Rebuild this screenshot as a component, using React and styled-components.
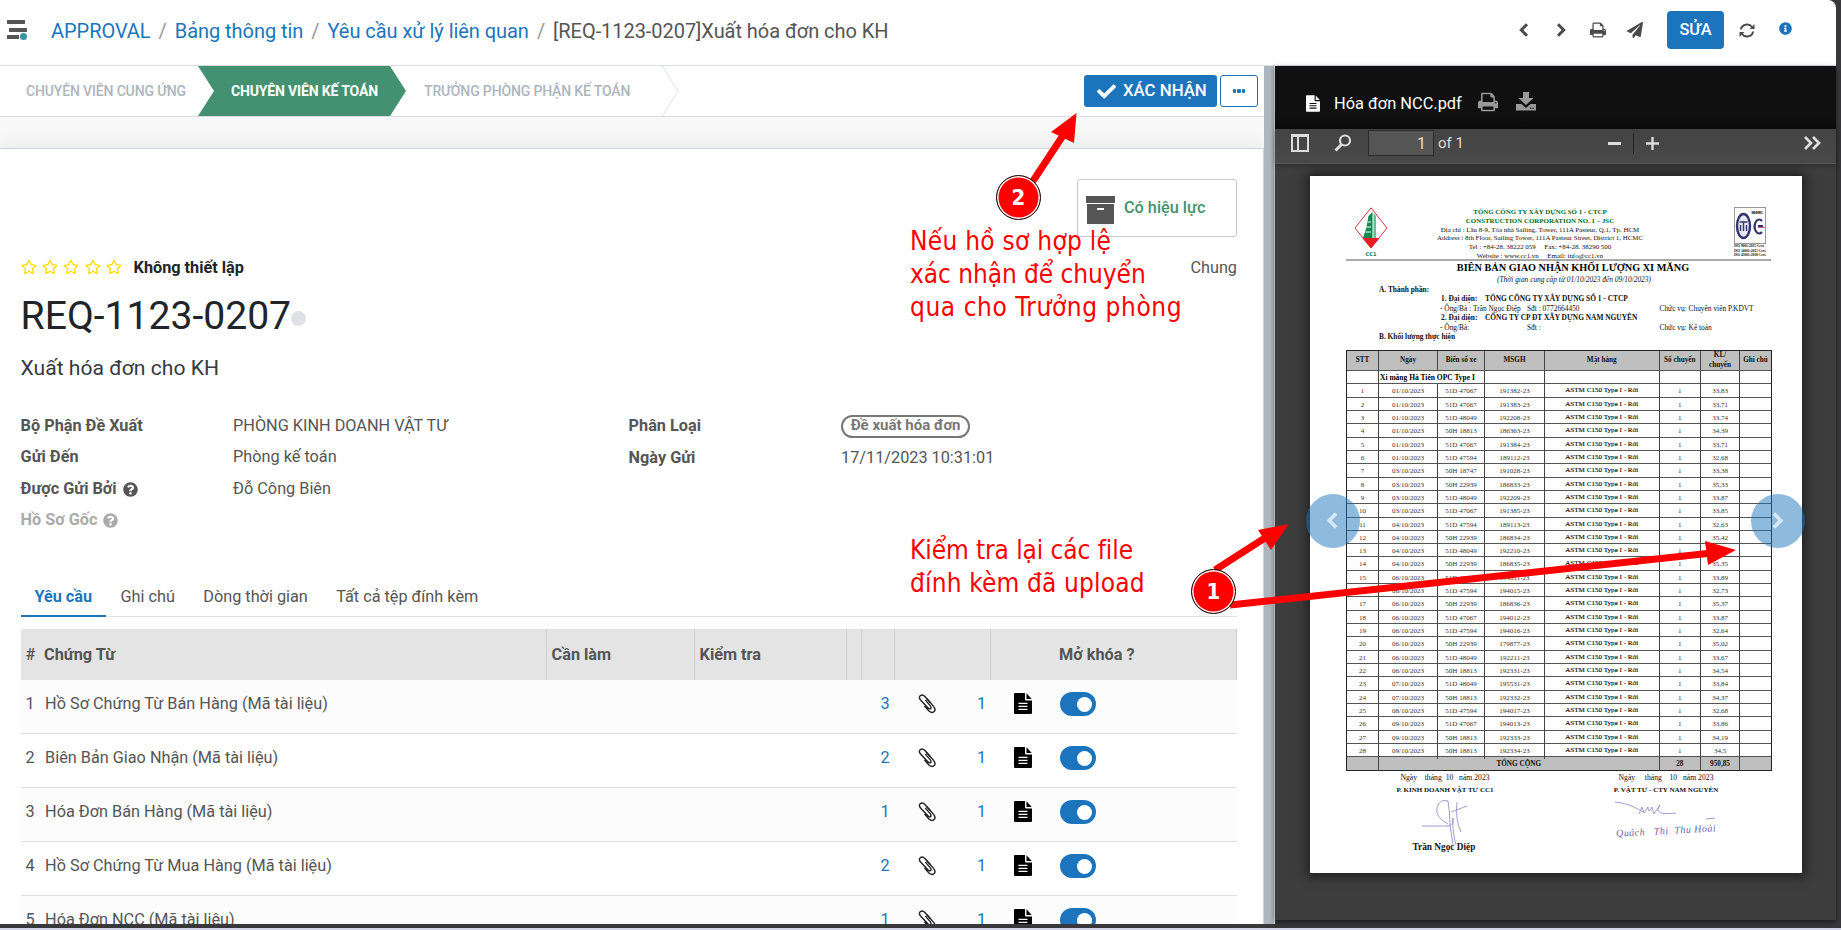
import React from "react";
import styled, { createGlobalStyle, css } from "styled-components";
import { FaPaperPlane, FaCheck, FaInfoCircle, FaQuestionCircle, FaRegStar } from "react-icons/fa";

const Global = createGlobalStyle`
  * { box-sizing: border-box; }
  html, body, #root { margin: 0; height: 100%; }
  body { font-family: Roboto, "Liberation Sans", sans-serif; font-size: 16.25px; color: #555; overflow: hidden; background: #3a3a3c; }
  svg { display: block; }
`;

const Screen = styled.div`
  position: relative; width: 1841px; height: 930px; overflow: hidden;
  display: flex; flex-direction: column; background: #38383a;
`;
const Frame = styled.div`
  width: 1836px; height: 928px; display: flex; flex-direction: column;
`;
const BottomEdge = styled.div`height: 2px; background: #d3d4e8;`;

/* top bar */
const TopBar = styled.header`
  height: 66px; flex: none; display: flex; align-items: flex-start; background: #fff;
  border-bottom: 1px solid #d9dde2; border-top-right-radius: 8px; padding: 0 44px 0 7px;
`;
const Burger = styled.div`width: 44px; padding-top: 20px;`;
const Crumbs = styled.nav`
  display: flex; font-size: 20px; line-height: 24px; padding-top: 19px; white-space: nowrap; flex: 1; color: #555;
  letter-spacing: -.05px;
  a { color: #1c75bc; }
  i { font-style: normal; color: #999; margin: 0 8px; }
`;
const TopActions = styled.div`
  display: flex; align-items: center; height: 38px; margin-top: 11px; color: #555;
`;
const TopIcon = styled.span`
  display: flex; margin-right: ${(p) => p.$gap}px; margin-top: ${(p) => p.$drop || 0}px; color: ${(p) => p.$color || "#4a4a4a"};
`;
const EditButton = styled.button`
  width: 57px; height: 38px; border: 0; border-radius: 4px; background: #1c75bc; color: #fff; padding: 0 0 2px;
  font: 500 16.3px Roboto, sans-serif; margin-right: 15px;
`;

/* panels */
const Body = styled.div`display: flex; height: 862px;`;
const FormPanel = styled.section`
  width: 1264px; height: 858px; display: flex; flex-direction: column; background: #f8f8f8; overflow: hidden;
`;
const Splitter = styled.div`width: 11px; height: 858px; background: #adb5bd; border-right: 1px solid #e4e7ea;`;

const StatusBar = styled.div`
  height: 51px; flex: none; display: flex; background: #fff; border-bottom: 1px solid #d9dde2;
  align-items: flex-start; padding-right: 6px;
`;
const Step = styled.div`
  height: 50px; width: ${(p) => p.$w}px; padding-left: ${(p) => p.$pad}px; display: flex; align-items: center;
  font-size: 14px; font-weight: 500; letter-spacing: -.15px; color: #adb5bd; white-space: nowrap;
  ${(p) => p.$active && css`
    background: #439170; color: #fff; font-weight: 700; margin-right: -16px;
    clip-path: polygon(0 0, 192px 0, 208px 50%, 192px 100%, 0 100%, 16px 50%);
  `}
`;
const Spacer = styled.div`flex: 1;`;
const ConfirmButton = styled.button`
  display: flex; align-items: center; width: 133px; height: 32px; margin: 9px 3px 0 0; border: 0; border-radius: 3px;
  background: #1c75bc; color: #fff; font: 500 16.8px Roboto, sans-serif; padding: 0 0 2px 13px; white-space: nowrap;
  svg { margin-right: 7px; position: relative; top: 1px; }
`;
const MoreButton = styled.button`
  width: 38px; height: 32px; margin-top: 9px; border: 1px solid #1c75bc; border-radius: 3px; background: #fff; padding: 0 0 1px;
  display: flex; align-items: center; justify-content: center; gap: 1px;
  i { width: 3.6px; height: 4px; background: #1c75bc; border-radius: 1px; }
`;
const Sheet = styled.div`
  margin-top: 31px; flex: 1; background: #fff; border-top: 1px solid #ced4da; border-right: 1px solid #ced4da;
  box-shadow: 0 -6px 16px rgba(0,0,0,.05); padding: 30px 26px 0 20.6px; display: flex; flex-direction: column; overflow: hidden;
`;
const StatBox = styled.div`
  align-self: flex-end; width: 160px; height: 58px; border: 1px solid #c5c9cc; border-radius: 3px; flex: none;
  display: flex; padding: 16px 0 0 8px; color: #439170; font-weight: 500;
  span { margin: 2px 0 0 9px; white-space: nowrap; }
`;
const RatingRow = styled.div`
  display: flex; height: 20px; margin-top: 20px; align-items: center; flex: none;
  strong { color: #212529; font-weight: 700; margin-left: 6px; }
  em { margin-left: auto; font-style: normal; }
`;
const Star = styled.span`color: #fd0; width: 21.4px; height: 16px; margin-top: -1px;`;
const Title = styled.h1`
  margin: 9.5px 0 0; height: 58px; display: flex; align-items: center; color: #212529; font-size: 39.1px; font-weight: 400; flex: none; white-space: nowrap;
  i { width: 15px; height: 15px; border-radius: 50%; background: #dee2e6; margin: 5px 0 0 -.5px; }
`;
const Subtitle = styled.div`font-size: 21.1px; line-height: 26px; margin-top: 10px; color: #343a40; flex: none;`;
const Fields = styled.div`display: flex; margin-top: 33.5px; height: 126px; flex: none;`;
const FieldColumn = styled.div`width: ${(p) => p.$w}px;`;
const Field = styled.div`
  display: flex; height: ${(p) => p.$h || 31.3}px; line-height: 24px;
  label { width: 212.5px; font-weight: 700; color: ${(p) => (p.$muted ? "#aaa" : "#555")}; display: flex; white-space: nowrap; }
  label svg { margin: 5px 0 0 6px; }
`;
const Tag = styled.span`
  width: 129px; height: 23px; border: 2px solid #777; border-radius: 12px; font-size: 15px; font-weight: 700; color: #777;
  line-height: 17px; text-align: center; white-space: nowrap; margin-top: 1px;
`;
const Tabs = styled.div`
  display: flex; margin-top: 36.4px; height: 41px; flex: none; border-bottom: 1px solid #dee2e6; line-height: 41px;
`;
const Tab = styled.div`
  padding: 0 14.2px; white-space: nowrap; height: 41px;
  ${(p) => p.$active && css`color: #1c75bc; font-weight: 700; border-bottom: 2px solid #1c75bc; padding-left: 13.8px;`}
`;
const Grid = styled.div`margin-top: 11.6px; width: 1216px; flex: none;`;
const HeadRow = styled.div`display: flex; height: 51px; background: #e4e4e4; line-height: 51px; font-weight: 700;`;
const HeadCell = styled.div`
  width: ${(p) => p.$w}px; padding-left: ${(p) => p.$pad ?? 5}px; border-right: 1px solid #cdcfd1; white-space: nowrap; flex: none;
  b { display: inline-block; width: 18.5px; font-weight: 500; }
`;
const DocRow = styled.div`
  display: flex; height: 53.9px; background: ${(p) => (p.$odd ? "#fcfcfc" : "#fff")}; border-bottom: 1px solid #dcdfe3; padding: 12px 0 0 5px;
  line-height: 23px;
`;
const Cell = styled.div`
  width: ${(p) => p.$w}px; flex: none; white-space: nowrap; padding-top: ${(p) => p.$top || 0}px;
  ${(p) => p.$link && css`color: #1c75bc;`}
`;
const Toggle = styled.div`
  width: 36px; height: 24px; border-radius: 12px; background: #1c75bc; padding: 5px 4px 4px 17px;
  i { display: block; width: 15px; height: 15px; border-radius: 50%; background: #fff; }
`;

/* viewer */
const Viewer = styled.section`
  width: 561px; height: 854px; display: flex; flex-direction: column; background: #3d3d3d; box-shadow: 0 2px 5px rgba(0,0,0,.5);
`;
const ViewerHead = styled.div`
  height: 63px; flex: none; background: linear-gradient(#101010 80%, #0b0b0b); color: #fff; display: flex; align-items: center; padding: 11px 0 0 31px;
  font-size: 16.4px; white-space: nowrap;
  span { margin: 1px 16px 0 14px; }
`;
const HeadGlyph = styled.div`display: flex; margin: -3px 18px 0 0;`;
const PdfBar = styled.div`
  height: 35px; flex: none; background: linear-gradient(#434343, #494949); border-bottom: 1px solid #555; box-shadow: 0 2px 4px rgba(0,0,0,.25);
  display: flex; align-items: center; padding: 0 15px 6px 16px; color: #ddd; font-size: 16px; z-index: 1;
`;
const PageInput = styled.div`
  width: 66px; height: 26px; border: 1px solid #2b2b2b; background: #555; text-align: right; padding-right: 7px; line-height: 25px; margin: 0 4px 0 16px;
`;
const PageCount = styled.span`font-size: 15px;`;
const BarGap = styled.div`width: ${(p) => p.$w}px;`;
const BarRule = styled.div`width: 1px; height: 21px; background: #222;`;
const PdfStage = styled.div`flex: 1; padding: 12px 0 0 35px;`;
const Page = styled.article`
  width: 492px; height: 697px; background: #fff; box-shadow: 0 0 10px 3px rgba(0,0,0,.5); color: #111;
  font-family: "Liberation Serif", serif; font-size: 8px; padding: 31px 31px 0 36px;
`;
const Letterhead = styled.div`
  display: flex; height: 54px; border-bottom: 2px solid #aaa; padding: 0 4px 0 8px;
`;
const Address = styled.div`
  width: 206px; text-align: center; margin: 0 91px 0 49px; white-space: pre; font-size: 6.92px; line-height: 8.8px; padding-top: 1px;
  b { display: block; color: #006a20; }
`;
const CertText = styled.div`font-size: 3.7px; line-height: 4.6px; width: 31px; white-space: nowrap; font-weight: 700; letter-spacing: -.1px;`;
const DocTitle = styled.h2`margin: 0 0 0 28px; font-size: 10.25px; line-height: 14px; text-align: center; width: 398px; white-space: nowrap; color: #000;`;
const DocSub = styled.div`font-style: italic; font-size: 7.4px; line-height: 9px; text-align: center; padding-left: 31px; height: 9.5px;`;
const Party = styled.div`
  display: flex; height: 9.6px; line-height: 9.6px; font-size: 7.4px; white-space: nowrap; padding-left: ${(p) => p.$in}px;
  > * { width: ${(p) => p.$w}px; }
  > :nth-child(2) { width: ${(p) => 219.500 - p.$w}px; }
`;
const Ledger = styled.div`border: 1px solid #222; margin-top: 8px; width: 426px;`;
const LedgerRow = styled.div`
  display: grid; grid-template-columns: 32px 59px 47px 60px 114.5px 41.5px 39px 31px; height: ${(p) => p.$h || 13.32}px; font-size: 7px; text-align: center; align-items: stretch;
  border-bottom: 1px solid #555; line-height: ${(p) => (p.$h || 16) - 1}px; white-space: nowrap; color: #333;
  > * { border-right: 1px solid #444; }
  > :last-child { border-right: 0; }
  ${(p) => p.$shade && css`background: #bfbfbf; font-weight: 700; color: #111; font-size: 7.2px;`}
  &:last-child { border-bottom: 0; line-height: 14px; }
`;
const Goods = styled.span`font-size: 7.1px; color: #000; line-height: 12px; -webkit-text-stroke: .1px #000;`;
const Stacked = styled.span`line-height: 9.5px; white-space: pre;`;
const GroupName = styled.span`grid-column: 2 / 4; text-align: left; padding-left: 1px; font-weight: 700; font-size: 7.5px; color: #000; line-height: 13px;`;
const TotalName = styled.span`grid-column: 2 / 6;`;
const Signs = styled.div`display: flex; padding-top: 1.5px;`;
const Sign = styled.div`
  width: ${(p) => p.$w}px; margin-left: ${(p) => p.$ml}px; text-align: center; font-size: 7.7px; white-space: pre; line-height: 10px;
  b { display: block; margin-top: 2px; font-size: 7px; }
  svg { margin: 5px auto 0; }
`;
const Signer = styled.div`font-weight: 700; font-size: 9.3px; line-height: 10px; margin: -8px 2px 0 0;`;
const Handwriting = styled.div`font: italic 10px "Liberation Serif", serif; color: #6a62b5; letter-spacing: .45px; margin-top: 5px; transform: rotate(-3deg);`;

/* overlays */
const NavDot = styled.button`
  position: absolute; left: ${(p) => p.$x}px; top: 494px; width: 54px; height: 54px; border-radius: 50%; border: 0; padding: 0 1px 1px 0;
  background: rgba(28,117,188,.5); color: rgba(255,255,255,.65); display: flex; align-items: center; justify-content: center;
`;
const Arrows = styled.svg`position: absolute; left: 0; top: 0;`;
const Note = styled.div`
  position: absolute; left: 910px; top: ${(p) => p.$y}px; color: #f00; white-space: nowrap;
  font: 26px/33.2px "DejaVu Sans Condensed", "DejaVu Sans", sans-serif; font-stretch: condensed;
`;
const NoteLine = styled.div`letter-spacing: ${(p) => p.$ls}px;`;
const Marker = styled.div`
  position: absolute; left: ${(p) => p.$x - 22.5}px; top: ${(p) => p.$y - 22.5}px; width: 45px; height: 45px; border-radius: 50%;
  background: #f00; border: 1.5px solid #111; box-shadow: inset 0 0 0 1.5px #fff; color: #fff; text-align: center;
  font: 700 22px/43px "DejaVu Sans Condensed", "DejaVu Sans", sans-serif; font-stretch: condensed;
`;

const printPath = "M384 1536h896v-256h-896v256zm0-640h896v-384h-160q-40 0-68-28t-28-68v-160h-640v640zm1152 64q0-26-19-45t-45-19-45 19-19 45 19 45 45 19 45-19 19-45zm128 0v416q0 13-9.500 22.500t-22.500 9.500h-224v160q0 40-28 68t-68 28h-960q-40 0-68-28t-28-68v-160h-224q-13 0-22.500-9.500t-9.500-22.500v-416q0-79 56.500-135.500t135.500-56.500h64v-544q0-40 28-68t68-28h672q40 0 88 20t76 48l152 152q28 28 48 76t20 88v256h64q79 0 135.500 56.500t56.500 135.500z";
const PrintIcon = ({ size, color = "currentColor" }) => (
  <svg width={size} height={size} viewBox="0 64 1664 1664" fill={color}><path d={printPath} /></svg>
);
const FileIcon = ({ w, h, color }) => (
  <svg width={w} height={h} viewBox="0 0 18 21" fill={color}>
    <path fillRule="evenodd" d="M1 0h10v6.300q0 1.200 1.200 1.200H18V20q0 1-1 1H1q-1 0-1-1V1Q0 0 1 0zM4.500 9.800v1.300h9V9.800zm0 3v1.300h9v-1.300zm0 3v1.300h9v-1.300z" />
    <path d="M12.500.3L17.700 6h-5.200z" />
  </svg>
);
const Chevron = ({ left, size = 14 }) => (
  <svg width={size} height={size} viewBox="0 0 14 14" fill="none" stroke="currentColor" strokeWidth="3">
    <path d={left ? "M10 1.200L4.300 7 10 12.800" : "M4 1.200L9.700 7 4 12.800"} />
  </svg>
);
const DownloadIcon = () => (
  <svg width="20" height="19" viewBox="0 0 20 19" fill="#999">
    <path d="M7 0h6v6h4.500L10 13 2.500 6H7z" /><path fillRule="evenodd" d="M0 12h5.500l4.500 4 4.500-4H20V18.500H0zM14 15.500v1.300h1.300v-1.300zm2.500 0v1.300h1.300v-1.300z" />
  </svg>
);
const RefreshIcon = () => (
  <svg width="16" height="15" viewBox="0 0 16 15" fill="none" stroke="#4a4a4a" strokeWidth="2">
    <path d="M2 6.500A6 5.500 0 0 1 13 4M14 8.500A6 5.500 0 0 1 3 11" /><path d="M15.500 1v5h-5zM.5 14V9h5z" fill="#4a4a4a" stroke="none" />
  </svg>
);
const ClipIcon = () => (
  <svg width="18" height="20" viewBox="0 0 18 20" fill="none" stroke="#222" strokeWidth="1.400" strokeLinecap="round">
    <path d="M7.600 6.400l4.600 5.200q1.500 2.200.3 3t-2.700-.8L3 6.500Q.2 3.500 2.300 1.700T6.900 2.600l8.300 9.300q3 3.600 1 5.700t-5.300-.6L6.800 12.400" />
    <path d="M12 8.200L8.600 4.600" />
  </svg>
);
const ArchiveIcon = () => (
  <svg width="29" height="28" viewBox="0 0 29 28"><path fill="#555" fillRule="evenodd" d="M0 0h29v7H0zM1 8h27v20H1zM11 12v2h7v-2z" /></svg>
);
const Logo = () => (
  <svg width="34" height="49" viewBox="0 0 34 49">
    <path d="M17 .8L33 21 17 41 1 21z" fill="#fff" stroke="#d8333f" />
    <path d="M8.500 31h17L17 41.500z" fill="#ec1c24" />
    <path d="M14.500 9l4-4v26H9q4-10 5.500-22z" fill="#0f8a50" /><path d="M19.500 6l2.500 3v22h-2.500z" fill="#0f8a50" opacity=".6" />
    <path d="M13.500 15h3.500M12.500 20h4.500M11.500 25h5.500" stroke="#fff" strokeWidth="1" />
    <text x="17" y="48.500" textAnchor="middle" fontFamily="DejaVu Sans" fontWeight="700" fontSize="5" fill="#0f7a45">CC1</text>
  </svg>
);
const Cert = () => (
  <svg width="32" height="37" viewBox="0 0 32 37">
    <rect x=".5" y=".5" width="31" height="36" fill="#fff" stroke="#999" />
    <ellipse cx="9.500" cy="19" rx="6.500" ry="12" fill="#e6e7f2" stroke="#34346c" strokeWidth="2.400" />
    <path d="M5.500 15h8M9.500 15v9M6.500 18v6M12.500 18v6" stroke="#34346c" strokeWidth="1.400" />
    <path d="M28 14a4.500 7 0 1 0 0 11M24 19h5" fill="none" stroke="#34346c" strokeWidth="2.200" /><path d="M24 20.500h7" stroke="#e6506a" />
    <text x="17.500" y="7" fontSize="4" fontFamily="Liberation Sans" fontWeight="700" fill="#333" textLength="12">BM MRC</text>
  </svg>
);

const documents = [
  ["Hồ Sơ Chứng Từ Bán Hàng", 3], ["Biên Bản Giao Nhận", 2], ["Hóa Đơn Bán Hàng", 1], ["Hồ Sơ Chứng Từ Mua Hàng", 2], ["Hóa Đơn NCC", 1],
];
const deliveries = `01 51D 47067 191382 33,83
01 51D 47067 191383 33,71
01 51D 48049 192208 33,74
01 50H 18813 186363 34,39
01 51D 47067 191384 33,71
01 51D 47594 189112 32,68
03 50H 18747 191028 33,38
03 50H 22939 186833 35,33
03 51D 48049 192209 33,87
03 51D 47067 191385 33,85
04 51D 47594 189113 32,63
04 50H 22939 186834 35,42
04 51D 48049 192210 33,74
04 50H 22939 186835 35,35
06 51D 47067 194011 33,89
06 51D 47594 194015 32,73
06 50H 22939 186836 35,37
06 51D 47067 194012 33,87
06 51D 47594 194016 32,64
06 50H 22939 179877 35,02
06 51D 48049 192211 33,67
06 50H 18813 192331 34,54
07 51D 48049 195531 33,84
07 50H 18813 192332 34,37
08 51D 47594 194017 32,68
09 51D 47067 194013 33,86
09 50H 18813 192333 34,19
09 50H 18813 192334 34,5`.split("\n").map((l) => l.split(" "));

function Header() {
  return (
    <TopBar>
      <Burger>
        <svg width="21" height="21" viewBox="0 0 21 21" fill="#555">
          <rect width="18" height="4" rx=".5" /><rect x="2" y="8" width="18" height="4" rx=".5" /><rect y="15" width="12" height="4" rx=".5" /><circle cx="16.500" cy="16.500" r="3.500" fill="#35979c" />
        </svg>
      </Burger>
      <Crumbs>
        <a>APPROVAL</a><i>/</i><a>Bảng thông tin</a><i>/</i><a>Yêu cầu xử lý liên quan</a><i>/</i><span>[REQ-1123-0207]Xuất hóa đơn cho KH</span>
      </Crumbs>
      <TopActions>
        <TopIcon $gap={23}><Chevron left /></TopIcon>
        <TopIcon $gap={22}><Chevron /></TopIcon>
        <TopIcon $gap={21}><PrintIcon size={16} /></TopIcon>
        <TopIcon $gap={24}><FaPaperPlane size={16} /></TopIcon>
        <EditButton>SỬA</EditButton>
        <TopIcon $gap={24}><RefreshIcon /></TopIcon>
        <TopIcon $gap={0} $drop={-3} $color="#1c75bc"><FaInfoCircle size={13} /></TopIcon>
      </TopActions>
    </TopBar>
  );
}

function Form() {
  return (
    <FormPanel>
      <StatusBar>
        <Step $w={198} $pad={26}>CHUYÊN VIÊN CUNG ỨNG</Step>
        <Step $w={208} $pad={33} $active>CHUYÊN VIÊN KẾ TOÁN</Step>
        <Step $w={272} $pad={34}>TRƯỞNG PHÒNG PHẬN KẾ TOÁN</Step>
        <svg width="17" height="50" viewBox="0 0 17 50" fill="none" stroke="#dee2e6"><path d="M.5 0L16 25 .5 50" /></svg>
        <Spacer />
        <ConfirmButton><FaCheck size={19} />XÁC NHẬN</ConfirmButton>
        <MoreButton><i /><i /><i /></MoreButton>
      </StatusBar>
      <Sheet>
        <StatBox><ArchiveIcon /><span>Có hiệu lực</span></StatBox>
        <RatingRow>
          {[1, 2, 3, 4, 5].map((n) => <Star key={n}><FaRegStar size={16} /></Star>)}
          <strong>Không thiết lập</strong><em>Chung</em>
        </RatingRow>
        <Title>REQ-1123-0207<i /></Title>
        <Subtitle>Xuất hóa đơn cho KH</Subtitle>
        <Fields>
          <FieldColumn $w={608}>
            <Field><label>Bộ Phận Đề Xuất</label><span>PHÒNG KINH DOANH VẬT TƯ</span></Field>
            <Field><label>Gửi Đến</label><span>Phòng kế toán</span></Field>
            <Field><label>Được Gửi Bởi <FaQuestionCircle size={15} /></label><span>Đỗ Công Biên</span></Field>
            <Field $muted><label>Hồ Sơ Gốc <FaQuestionCircle size={15} /></label></Field>
          </FieldColumn>
          <FieldColumn $w={500}>
            <Field $h={32.3}><label>Phân Loại</label><Tag>Đề xuất hóa đơn</Tag></Field>
            <Field><label>Ngày Gửi</label><span>17/11/2023 10:31:01</span></Field>
          </FieldColumn>
        </Fields>
        <Tabs>
          <Tab $active>Yêu cầu</Tab><Tab>Ghi chú</Tab><Tab>Dòng thời gian</Tab><Tab>Tất cả tệp đính kèm</Tab>
        </Tabs>
        <Grid>
          <HeadRow>
            <HeadCell $w={526}><b>#</b>Chứng Từ</HeadCell><HeadCell $w={148}>Cần làm</HeadCell><HeadCell $w={152}>Kiểm tra</HeadCell>
            <HeadCell $w={15} /><HeadCell $w={33} /><HeadCell $w={96} /><HeadCell $w={246} $pad={68.5}>Mở khóa ?</HeadCell>
          </HeadRow>
          {documents.map(([name, files], n) => (
            <DocRow key={name} $odd={n % 2 === 0}>
              <Cell $w={19.5}>{n + 1}</Cell><Cell $w={835.5}>{name} (Mã tài liệu)</Cell>
              <Cell $w={37} $link>{files}</Cell><Cell $w={59.5} $top={2}><ClipIcon /></Cell>
              <Cell $w={36.5} $link>1</Cell><Cell $w={46} $top={1}><FileIcon w={18} h={21} color="#000" /></Cell>
              <Toggle><i /></Toggle>
            </DocRow>
          ))}
        </Grid>
      </Sheet>
    </FormPanel>
  );
}

function PdfPage() {
  return (
    <Page>
      <Letterhead>
        <Logo />
        <Address>
          <b>TỔNG CÔNG TY XÂY DỰNG SỐ 1 - CTCP</b><b>CONSTRUCTION CORPORATION NO. 1 – JSC</b>
          {"Địa chỉ : Lầu 8-9, Tòa nhà Sailing, Tower, 111A Pasteur, Q.1, Tp. HCM\nAddress : 8th Floor, Sailing Tower, 111A Pasteur Street, District 1, HCMC\nTel : +84-28. 38222 059     Fax: +84-28. 38290 500\nWebsite : www.cc1.vn     Email: info@cc1.vn"}
        </Address>
        <div><Cert /><CertText>ISO 9001:2015 Cert.<br />ISO 14001:2015 Cert.<br />ISO 45001:2018 Cert.</CertText></div>
      </Letterhead>
      <DocTitle>BIÊN BẢN GIAO NHẬN KHỐI LƯỢNG XI MĂNG</DocTitle>
      <DocSub>(Thời gian cung cấp từ 01/10/2023 đến 09/10/2023)</DocSub>
      <Party $in={33} $w={100}><b>A. Thành phần:</b></Party>
      <Party $in={95} $w={44}><b>1. Đại diện:</b><b>TỔNG CÔNG TY XÂY DỰNG SỐ 1 - CTCP</b></Party>
      <Party $in={94} $w={87}><span>- Ông/Bà : Trần Ngọc Điệp</span><span>Sđt : 0772664450</span><span>Chức vụ: Chuyên viên P.KDVT</span></Party>
      <Party $in={95} $w={44}><b>2. Đại diện:</b><b>CÔNG TY CP ĐT XÂY DỰNG NAM NGUYÊN</b></Party>
      <Party $in={94} $w={87}><span>- Ông/Bà:</span><span>Sđt :</span><span>Chức vụ: Kế toán</span></Party>
      <Party $in={33} $w={100}><b>B. Khối lượng thực hiện</b></Party>
      <Ledger>
        <LedgerRow $h={20} $shade>
          <span>STT</span><span>Ngày</span><span>Biển số xe</span><span>MSGH</span><span>Mặt hàng</span><span>Số chuyến</span><Stacked>{"KL/\nchuyến"}</Stacked><span>Ghi chú</span>
        </LedgerRow>
        <LedgerRow><span /><GroupName>Xi măng Hà Tiên OPC Type I</GroupName><span /><span /><span /><span /><span /></LedgerRow>
        {deliveries.map(([day, a, b, code, load], n) => (
          <LedgerRow key={n}>
            <span>{n + 1}</span><span>{day}/10/2023</span><span>{a} {b}</span><span>{code}-23</span><Goods>ASTM C150 Type I - Rời</Goods><span>1</span><span>{load}</span><span />
          </LedgerRow>
        ))}
        <LedgerRow $shade><span /><TotalName>TỔNG CỘNG</TotalName><span>28</span><span>950,85</span><span /></LedgerRow>
      </Ledger>
      <Signs>
        <Sign $w={100} $ml={49}>
          {"Ngày    tháng  10   năm 2023"}<b>P. KINH DOANH VẬT TƯ CC1</b>
          <svg width="46" height="50" viewBox="0 0 46 50" fill="none" stroke="#8b82c6" strokeWidth=".8"><path d="M0 26h27q5-2 4-8-1 12 3 27M26 24Q13 17 15 8 18-2 26 1q2 12 2 24l3 20M29 12l16-6M35 2q-2 18 4 30" /></svg>
          <Signer>Trần Ngọc Diệp</Signer>
        </Sign>
        <Sign $w={106} $ml={118}>
          {"Ngày     tháng    10   năm 2023"}<b>P. VẬT TƯ - CTY NAM NGUYÊN</b>
          <svg width="104" height="20" viewBox="0 0 104 20" fill="none" stroke="#8b82c6" strokeWidth=".8"><path d="M1 2q14 1 28 10M25 14l3-7 2 6 4-6q0 8 4 0l2 7 6-9q-8 11 16 8M92 19l9-1" /></svg>
          <Handwriting>Quách   Thị  Thu Hoài</Handwriting>
        </Sign>
      </Signs>
    </Page>
  );
}

function PdfViewer() {
  return (
    <Viewer>
      <ViewerHead>
        <FileIcon w={14} h={17} color="#fff" /><span>Hóa đơn NCC.pdf</span>
        <HeadGlyph><PrintIcon size={20} color="#999" /></HeadGlyph><HeadGlyph><DownloadIcon /></HeadGlyph>
      </ViewerHead>
      <PdfBar>
        <svg width="18" height="18" viewBox="0 0 18 18"><path fill="#ddd" fillRule="evenodd" d="M0 0h18v18H0zM2 3v13h4V3zM8 3v13h8V3z" /></svg>
        <BarGap $w={25} />
        <svg width="18" height="18" viewBox="0 0 18 18" fill="none" stroke="#ddd"><circle cx="11" cy="6.500" r="5" strokeWidth="2.200" /><path d="M7.500 10.500L1.500 16.500" strokeWidth="3" /></svg>
        <PageInput>1</PageInput><PageCount>of 1</PageCount>
        <Spacer />
        <svg width="13" height="3"><rect width="13" height="3" fill="#ddd" /></svg>
        <BarGap $w={12} /><BarRule /><BarGap $w={12} />
        <svg width="13" height="13" viewBox="0 0 13 13"><path d="M5.300 0h2.400v5.300H13v2.400H7.700V13H5.300V7.700H0V5.300h5.300z" fill="#ddd" /></svg>
        <BarGap $w={144} />
        <svg width="18" height="14" viewBox="0 0 18 14" fill="none" stroke="#ddd" strokeWidth="2.700"><path d="M2 1l6 6-6 6M10 1l6 6-6 6" /></svg>
      </PdfBar>
      <PdfStage><PdfPage /></PdfStage>
    </Viewer>
  );
}

export default function App() {
  return (
    <Screen>
      <Global />
      <Frame>
        <Header />
        <Body><Form /><Splitter /><PdfViewer /></Body>
      </Frame>
      <BottomEdge />
      <NavDot $x={1306}><Chevron left size={17} /></NavDot>
      <NavDot $x={1751}><Chevron size={17} /></NavDot>
      <Arrows width="1841" height="930" fill="#f00" stroke="#f00">
        <path d="M1033 181L1064 134M1215 570L1268 536M1230 605L1712 553" strokeWidth="7" />
        <path d="M1076.500 113L1051 132 1074 143zM1289 524L1258 530 1271 550zM1736 550L1705 541 1708 565z" stroke="none" />
      </Arrows>
      <Note $y={225}>
        <NoteLine $ls={0.27}>Nếu hồ sơ hợp lệ</NoteLine><NoteLine $ls={-0.07}>xác nhận để chuyển</NoteLine><NoteLine $ls={0.56}>qua cho Trưởng phòng</NoteLine>
      </Note>
      <Note $y={534}><NoteLine $ls={-0.09}>Kiểm tra lại các file</NoteLine><NoteLine $ls={0.15}>đính kèm đã upload</NoteLine></Note>
      <Marker $x={1018.5} $y={197}>2</Marker>
      <Marker $x={1213.5} $y={591}>1</Marker>
    </Screen>
  );
}
